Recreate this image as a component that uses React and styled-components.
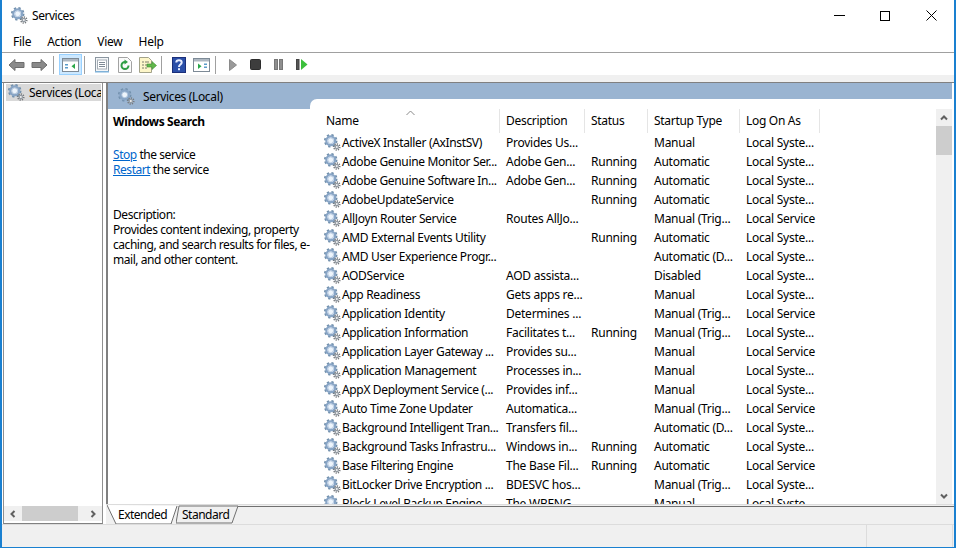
import React from 'react';
import styled, { createGlobalStyle } from 'styled-components';

const Global = createGlobalStyle`
  html, body { margin: 0; padding: 0; background: #fff; overflow: hidden; }
  * { box-sizing: border-box; }
`;

const Win = styled.div`
  width: 956px; height: 548px; display: flex; flex-direction: column;
  border-left: 2px solid #1a80d0; border-right: 2px solid #1a80d0; border-bottom: 1px solid #1a80d0;
  font: 12px/15px "Noto Sans", sans-serif; letter-spacing: -0.25px; color: #000; background: #fff; overflow: hidden;
`;
const TitleBar = styled.div`
  height: 31px; flex: none; display: flex; align-items: center; padding-left: 9px;
`;
const TitleText = styled.span` flex: 1; margin-left: 4px; letter-spacing: -0.45px; `;
const Caption = styled.button`
  width: 46px; height: 30px; border: 0; background: none; padding: 0; display: flex; align-items: center; justify-content: center;
`;
const MenuBar = styled.div`
  height: 22px; flex: none; display: flex; align-items: center; gap: 16px; padding-left: 11px; border-bottom: 1px solid #a0a0a0;
`;
const Toolbar = styled.div`
  height: 22px; flex: none; display: flex; align-items: center; padding: 1px 0 0 3px;
`;
const ToolButton = styled.div`
  width: 23px; height: 21px; display: flex; align-items: center; justify-content: center;
  border: 1px solid ${p => (p.$active ? '#99d1ff' : 'transparent')};
  background: ${p => (p.$active ? '#cce8ff' : 'transparent')};
`;
const ToolSep = styled.div` width: 1px; height: 18px; background: #a0a0a0; margin: 0 5px 0 2px; `;
const Band = styled.div` height: 8px; flex: none; background: #f0f0f0; border-bottom: 1px solid #808080; `;
const Main = styled.div`
  flex: 1; min-height: 0; display: flex; background: #fff;
`;
const TreePane = styled.div`
  width: 100px; margin-left: 1px; display: flex; flex-direction: column; background: #fff;
  border: 1px solid #909090; border-top: 0; border-bottom: 1px solid #808080;
`;
const TreeBody = styled.div` flex: 1; padding: 1px 1px 0 2px; `;
const TreeItem = styled.div`
  height: 17px; background: #d9d9d9; display: flex; align-items: center; gap: 4px; padding-left: 2px; overflow: hidden; white-space: nowrap; letter-spacing: -0.35px;
`;
const HScroll = styled.div`
  height: 15px; display: flex; align-items: center; background: #f0f0f0; margin-bottom: 2px;
`;
const ScrollArrow = styled.div` width: 18px; display: flex; align-items: center; justify-content: center; flex: none; `;
const HThumb = styled.div` width: 56px; height: 15px; background: #cdcdcd; `;
const HTrack = styled.div` flex: 1; `;
const RightPane = styled.div`
  flex: 1; min-width: 0; margin-left: 3px; display: flex; flex-direction: column;
`;
const View = styled.div`
  flex: 1; min-height: 0; display: flex; flex-direction: column; background: #fff;
  border-left: 2px solid #808080; margin-right: 2px;
`;
const ViewHeader = styled.div`
  height: 16px; flex: none; background: #9ab4d1; display: flex; align-items: center; padding-left: 10px; position: relative;
`;
const HeaderContent = styled.div` display: flex; align-items: center; gap: 8px; transform: translateY(5px); position: relative; z-index: 1; letter-spacing: -0.35px; `;
const ViewBody = styled.div` flex: 1; min-height: 0; display: flex; background: #9ab4d1; `;
const DescPane = styled.div`
  width: 202px; flex: none; margin-top: 10px; background: #fff; padding: 5px 0 0 5px; letter-spacing: -0.45px;
`;
const DescTitle = styled.div` font-weight: 700; height: 18px; margin-bottom: 15px; letter-spacing: -0.4px; `;
const Link = styled.a` color: #0066cc; text-decoration: underline; `;
const DescLine = styled.div` height: 15px; white-space: nowrap; `;
const DescText = styled.div` margin-top: 30px; white-space: nowrap; `;
const ListPane = styled.div`
  flex: 1; min-width: 0; background: #fff; border-top-left-radius: 7px; display: flex; position: relative; overflow: hidden;
`;
const List = styled.div` flex: 1; min-width: 0; padding-top: 10px; overflow: hidden; `;
const HeadRow = styled.div` height: 24px; display: flex; position: relative; letter-spacing: -0.3px; `;
const HeadCell = styled.div`
  width: ${p => p.$w}px; flex: none; padding-left: ${p => p.$pl || 6}px; height: 24px; line-height: 24px; border-right: 1px solid #e5e5e5;
`;
const SortCaret = styled.svg` position: absolute; left: 96px; top: 1px; `;
const Row = styled.div` height: 19px; display: flex; align-items: center; white-space: nowrap; `;
const NameCell = styled.div` width: 190px; flex: none; padding-left: 14px; display: flex; align-items: center; gap: 1px; letter-spacing: -0.35px; `;
const Cell = styled.div` width: ${p => p.$w}px; flex: none; padding-left: 6px; `;
const VScroll = styled.div`
  width: 16px; flex: none; margin-top: 10px; background: #f0f0f0; display: flex; flex-direction: column;
`;
const VArrow = styled.div` height: 17px; flex: none; display: flex; align-items: center; justify-content: center; `;
const VThumb = styled.div` height: 29px; flex: none; background: #cdcdcd; `;
const VTrack = styled.div` flex: 1; `;
const TabStrip = styled.div`
  height: 20px; flex: none; display: flex; position: relative; padding-left: 1px; background: #f0f0f0;
  border-top: 1px solid #dcdcdc;
`;
const TabLine = styled.div` position: absolute; left: 132px; right: 0; top: 1px; height: 1px; background: #707070; `;
const Tab = styled.div`
  position: relative; width: ${p => p.$w}px; height: 19px; flex: none; line-height: 20px; padding-left: ${p => p.$pl}px;
  margin-left: ${p => p.$ml || 0}px; letter-spacing: -0.5px;
`;
const TabText = styled.span` position: relative; `;
const TabShape = styled.svg` position: absolute; left: 0; top: 0; `;
const StatusBar = styled.div`
  height: 23px; flex: none; background: #f0f0f0; border-top: 1px solid #dcdcdc; display: flex; justify-content: flex-end;
`;
const StatusCell = styled.div` width: ${p => p.$w}px; border-left: 1px solid #dcdcdc; `;
const GearIcon = styled.svg` flex: none; `;

const Gear = () => (
  <GearIcon width="17" height="17" viewBox="0 0 17 17">
    <circle cx="6.7" cy="6.8" r="5.6" fill="none" stroke="#7391ad" strokeWidth="2.4" strokeDasharray="2.2 2.2" />
    <circle cx="6.7" cy="6.8" r="4.4" fill="none" stroke="#88a5c6" strokeWidth="2.2" />
    <circle cx="6.7" cy="6.8" r="2.9" fill="#eef5fc" stroke="#a9c0da" strokeWidth="0.8" />
    <circle cx="12.8" cy="13" r="3" fill="none" stroke="#76797d" strokeWidth="1.5" strokeDasharray="1.2 1.1" />
    <circle cx="12.8" cy="13" r="2.3" fill="#929aa2" />
    <circle cx="12.8" cy="13" r="1" fill="#f2f2f2" />
  </GearIcon>
);

const Ico = ({ w = 16, h = 16, children }) => <svg width={w} height={h} viewBox={`0 0 ${w} ${h}`}>{children}</svg>;
const Back = () => <Ico w={17} h={14}><path d="M1 7 7 1.5V4.5H16V9.5H7V12.5Z" fill="#8a8a8a" stroke="#6e6e6e" /></Ico>;
const Forward = () => <Ico w={17} h={14}><path d="M16 7 10 1.5V4.5H1V9.5H10V12.5Z" fill="#8a8a8a" stroke="#6e6e6e" /></Ico>;
const Console = () => (
  <Ico w={17} h={16}>
    <rect x=".5" y="1.5" width="16" height="13" fill="#fff" stroke="#7d8a96" />
    <rect x="1" y="2" width="15" height="2.5" fill="#aeb8c2" />
    <rect x="3" y="7" width="3" height="1.5" fill="#5b9bc9" /><rect x="3" y="10" width="3" height="1.5" fill="#5b9bc9" />
    <path d="M13 6.5V12L9.5 9.2Z" fill="#2aa84a" />
  </Ico>
);
const Props = () => (
  <Ico w={16} h={16}>
    <rect x="1.5" y=".5" width="13" height="14" fill="#f4f6f8" stroke="#8b96a0" />
    <rect x="1" y="14" width="14" height="1.5" fill="#7fb2d9" />
    <rect x="3.5" y="3" width="9" height="9" fill="#fff" stroke="#a5adb5" />
    <path d="M5 5.5h6M5 7.5h6M5 9.5h6" stroke="#7f8a95" />
  </Ico>
);
const Refresh = () => (
  <Ico w={14} h={16}>
    <path d="M.5.5H9.5L13.5 4.5V15.5H.5Z" fill="#fbfbfb" stroke="#a3a3a3" />
    <path d="M10.5 8.5A3.5 3.5 0 1 1 7 5" fill="none" stroke="#2f9e44" strokeWidth="2" />
    <path d="M6.5 2.5 10 5 6.5 7.5Z" fill="#2f9e44" />
  </Ico>
);
const Export = () => (
  <Ico w={18} h={16}>
    <path d="M.5.5H9.5L12.5 3.5V15.5H.5Z" fill="#fdf6c9" stroke="#a3a38a" />
    <path d="M3 5h2M3 8h2M3 11h2M6 5h4M6 8h2M6 11h2" stroke="#7d7d6a" />
    <path d="M8 7H13V4.5L17.5 8.5 13 12.5V10H8Z" fill="#62b84a" stroke="#3f8f33" strokeWidth=".6" />
  </Ico>
);
const Help = () => (
  <svg width="14" height="16" viewBox="0 0 14 16">
    <rect width="14" height="16" fill="#2b4fa8" />
    <rect x=".5" y=".5" width="13" height="15" fill="none" stroke="#1b2f7a" />
    <path d="M4.3 5.5C4.3 2.6 9.7 2.6 9.7 5.5 9.7 7.6 7 7.6 7 10" fill="none" stroke="#e8eeff" strokeWidth="2" />
    <rect x="6" y="11.2" width="2" height="2" fill="#e8eeff" />
  </svg>
);
const Console2 = () => (
  <Ico w={17} h={16}>
    <rect x=".5" y="1.5" width="16" height="13" fill="#fff" stroke="#7d8a96" />
    <rect x="1" y="2" width="15" height="2.5" fill="#aeb8c2" />
    <path d="M5 6.5V12L8.5 9.2Z" fill="#2aa84a" />
    <rect x="11" y="6.5" width="3" height="1.5" fill="#5b9bc9" /><rect x="11" y="9.5" width="3" height="1.5" fill="#5b9bc9" />
  </Ico>
);
const Play = () => <Ico w={8} h={12}><path d="M.5.5V11.5L7.5 6Z" fill="#9a9a9a" stroke="#8a8a8a" /></Ico>;
const Stop = () => <Ico w={11} h={11}><rect x=".5" y=".5" width="10" height="10" rx="1" fill="#3d3d3d" stroke="#2c2c2c" /></Ico>;
const Pause = () => <Ico w={9} h={11}><rect x=".5" y=".5" width="3" height="10" fill="#8f8f8f" stroke="#777" /><rect x="5.5" y=".5" width="3" height="10" fill="#8f8f8f" stroke="#777" /></Ico>;
const Resume = () => <Ico w={12} h={11}><rect x=".5" y=".5" width="2.5" height="10" fill="#555" stroke="#444" /><path d="M5 0V11L11.5 5.5Z" fill="#3cbf3c" /></Ico>;

const Chev = ({ d }) => (
  <svg width="8" height="8" viewBox="0 0 8 8">
    <path d={d} fill="none" stroke="#606060" strokeWidth="2" />
  </svg>
);

const rows = [
  ['ActiveX Installer (AxInstSV)', 'Provides Us...', '', 'Manual', 'Local Syste...'],
  ['Adobe Genuine Monitor Ser...', 'Adobe Gen...', 'Running', 'Automatic', 'Local Syste...'],
  ['Adobe Genuine Software In...', 'Adobe Gen...', 'Running', 'Automatic', 'Local Syste...'],
  ['AdobeUpdateService', '', 'Running', 'Automatic', 'Local Syste...'],
  ['AllJoyn Router Service', 'Routes AllJo...', '', 'Manual (Trig...', 'Local Service'],
  ['AMD External Events Utility', '', 'Running', 'Automatic', 'Local Syste...'],
  ['AMD User Experience Progr...', '', '', 'Automatic (D...', 'Local Syste...'],
  ['AODService', 'AOD assista...', '', 'Disabled', 'Local Syste...'],
  ['App Readiness', 'Gets apps re...', '', 'Manual', 'Local Syste...'],
  ['Application Identity', 'Determines ...', '', 'Manual (Trig...', 'Local Service'],
  ['Application Information', 'Facilitates t...', 'Running', 'Manual (Trig...', 'Local Syste...'],
  ['Application Layer Gateway ...', 'Provides su...', '', 'Manual', 'Local Service'],
  ['Application Management', 'Processes in...', '', 'Manual', 'Local Syste...'],
  ['AppX Deployment Service (...', 'Provides inf...', '', 'Manual', 'Local Syste...'],
  ['Auto Time Zone Updater', 'Automatica...', '', 'Manual (Trig...', 'Local Service'],
  ['Background Intelligent Tran...', 'Transfers fil...', '', 'Automatic (D...', 'Local Syste...'],
  ['Background Tasks Infrastru...', 'Windows in...', 'Running', 'Automatic', 'Local Syste...'],
  ['Base Filtering Engine', 'The Base Fil...', 'Running', 'Automatic', 'Local Service'],
  ['BitLocker Drive Encryption ...', 'BDESVC hos...', '', 'Manual (Trig...', 'Local Syste...'],
  ['Block Level Backup Engine ...', 'The WBENG...', '', 'Manual', 'Local Syste...'],
];

export default function App() {
  return (
    <Win>
      <Global />
      <TitleBar>
        <Gear />
        <TitleText>Services</TitleText>
        <Caption><svg width="11" height="11"><path d="M0 5.5H11" stroke="#000" /></svg></Caption>
        <Caption><svg width="10" height="10"><rect x=".5" y=".5" width="9" height="9" fill="none" stroke="#000" /></svg></Caption>
        <Caption><svg width="11" height="11"><path d="M.5.5 10.5 10.5M10.5.5.5 10.5" stroke="#000" /></svg></Caption>
      </TitleBar>
      <MenuBar><span>File</span><span>Action</span><span>View</span><span>Help</span></MenuBar>
      <Toolbar>
        <ToolButton><Back /></ToolButton>
        <ToolButton><Forward /></ToolButton>
        <ToolSep />
        <ToolButton $active><Console /></ToolButton>
        <ToolSep />
        <ToolButton><Props /></ToolButton>
        <ToolButton><Refresh /></ToolButton>
        <ToolButton><Export /></ToolButton>
        <ToolSep />
        <ToolButton><Help /></ToolButton>
        <ToolButton><Console2 /></ToolButton>
        <ToolSep />
        <ToolButton><Play /></ToolButton>
        <ToolButton><Stop /></ToolButton>
        <ToolButton><Pause /></ToolButton>
        <ToolButton><Resume /></ToolButton>
      </Toolbar>
      <Band />
      <Main>
        <TreePane>
          <TreeBody><TreeItem><Gear /><span>Services (Local)</span></TreeItem></TreeBody>
          <HScroll>
            <ScrollArrow><Chev d="M5.5 1 2.5 4 5.5 7" /></ScrollArrow>
            <HThumb />
            <HTrack />
            <ScrollArrow><Chev d="M2.5 1 5.5 4 2.5 7" /></ScrollArrow>
          </HScroll>
        </TreePane>
        <RightPane>
          <View>
            <ViewHeader><HeaderContent><Gear /><span>Services (Local)</span></HeaderContent></ViewHeader>
            <ViewBody>
              <DescPane>
                <DescTitle>Windows Search</DescTitle>
                <DescLine><Link>Stop</Link> the service</DescLine>
                <DescLine><Link>Restart</Link> the service</DescLine>
                <DescText>Description:<br />Provides content indexing, property<br />caching, and search results for files, e-<br />mail, and other content.</DescText>
              </DescPane>
              <ListPane>
                <List>
                  <HeadRow>
                    <HeadCell $w={190} $pl={16}>Name</HeadCell>
                    <HeadCell $w={85}>Description</HeadCell>
                    <HeadCell $w={63}>Status</HeadCell>
                    <HeadCell $w={92}>Startup Type</HeadCell>
                    <HeadCell $w={80}>Log On As</HeadCell>
                    <SortCaret width="9" height="6" viewBox="0 0 9 6"><path d="M.5 5 4.5 1 8.5 5" fill="none" stroke="#8a8a8a" /></SortCaret>
                  </HeadRow>
                  {rows.map(r => (
                    <Row key={r[0]}>
                      <NameCell><Gear /><span>{r[0]}</span></NameCell>
                      <Cell $w={85}>{r[1]}</Cell>
                      <Cell $w={63}>{r[2]}</Cell>
                      <Cell $w={92}>{r[3]}</Cell>
                      <Cell $w={80}>{r[4]}</Cell>
                    </Row>
                  ))}
                </List>
                <VScroll>
                  <VArrow><Chev d="M1 5.5 4 2.5 7 5.5" /></VArrow>
                  <VThumb />
                  <VTrack />
                  <VArrow><Chev d="M1 2.5 4 5.5 7 2.5" /></VArrow>
                </VScroll>
              </ListPane>
            </ViewBody>
          </View>
          <TabStrip>
            <TabLine />
            <Tab $w={72} $pl={11}>
              <TabShape width="72" height="19"><path d="M0 0 9 19H64L70 1" fill="#fff" stroke="#707070" /></TabShape>
              <TabText>Extended</TabText>
            </Tab>
            <Tab $w={64} $pl={6} $ml={-3}>
              <TabShape width="64" height="19"><path d="M0 18 3 1H62L56 18Z" fill="#f0f0f0" stroke="#707070" /></TabShape>
              <TabText>Standard</TabText>
            </Tab>
          </TabStrip>
        </RightPane>
      </Main>
      <StatusBar><StatusCell $w={86} /><StatusCell $w={2} /></StatusBar>
    </Win>
  );
}
